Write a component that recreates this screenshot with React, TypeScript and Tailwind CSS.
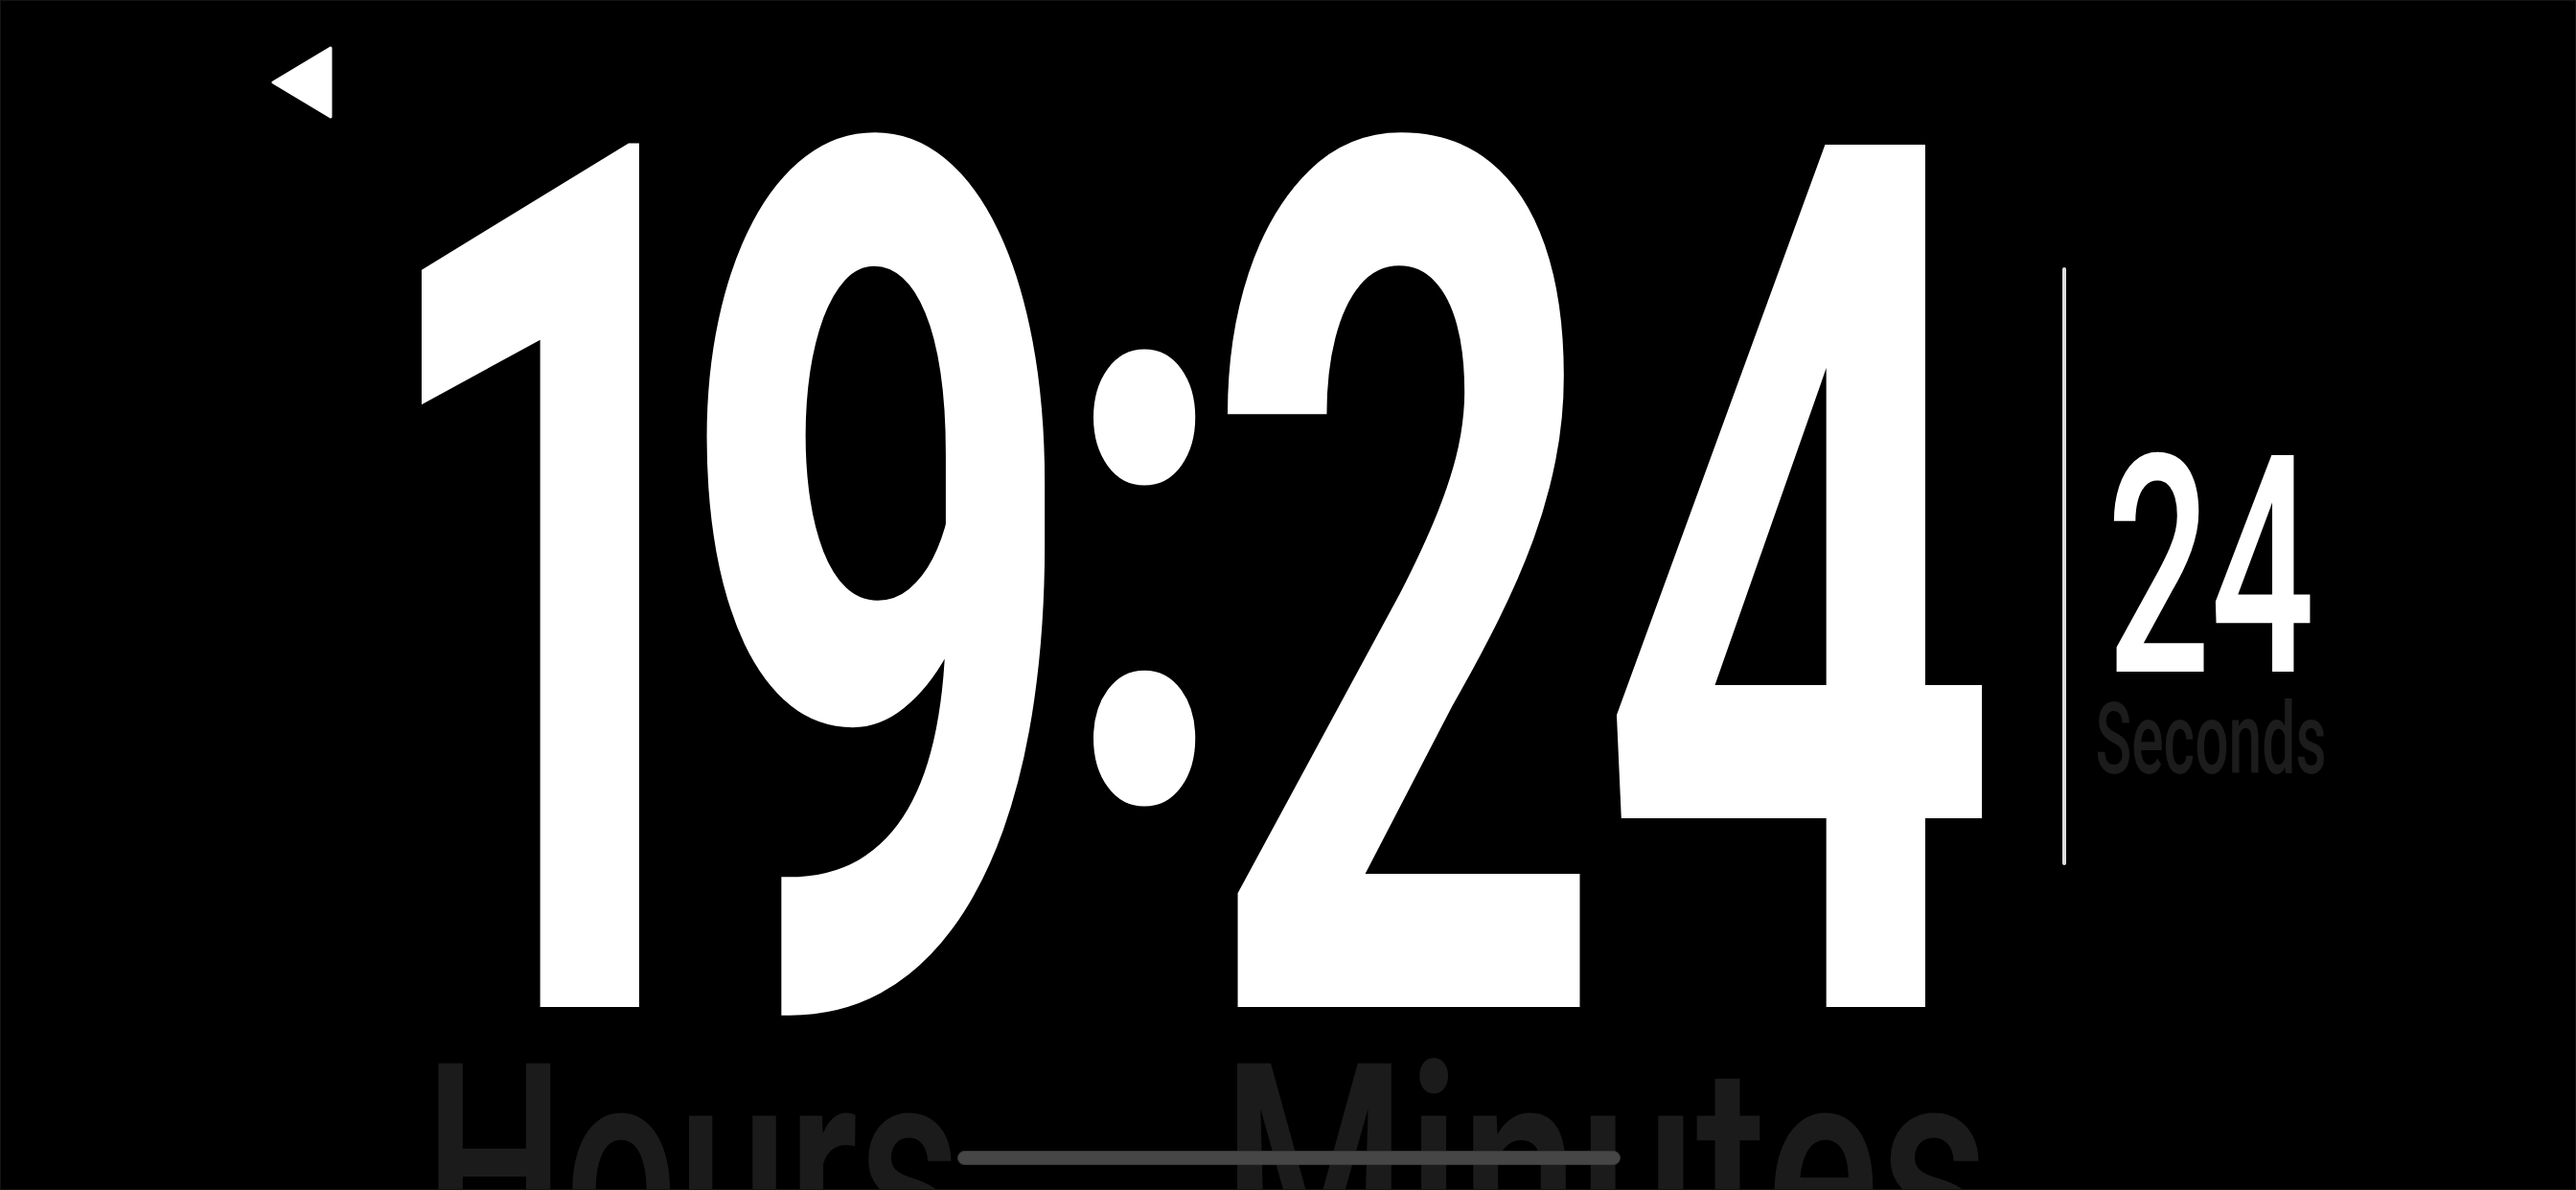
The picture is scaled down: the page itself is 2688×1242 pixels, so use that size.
import React from "react";

function Glyph({ ch, box, text }: { ch: string; box: string; text: string }) {
  return (
    <div className={`flex shrink-0 justify-center ${box}`}>
      <span className={`block whitespace-nowrap ${text}`}>{ch}</span>
    </div>
  );
}

export default function App() {
  const big = "text-[1266px] leading-[977px] font-bold text-white scale-x-[0.58]";
  return (
    <div className="relative flex h-[1242px] w-[2688px] flex-col overflow-hidden border border-[#141414] bg-black font-['Roboto',sans-serif]">
      {/* header */}
      <div className="flex h-[129px] shrink-0 items-start pl-[282px] pt-[47px]">
        <button aria-label="Back" className="block">
          <svg width="64" height="76" viewBox="0 0 64 76">
            <polygon points="62,2 2,38 62,74" fill="#ffffff" stroke="#ffffff" strokeWidth="3" strokeLinejoin="round" />
          </svg>
        </button>
      </div>

      {/* clock row */}
      <div className="flex h-[977px] shrink-0 items-start pl-[439px]">
        <Glyph ch="1" box="ml-[10px] w-[280px]" text={big} />
        <Glyph ch="9" box="w-[374px]" text={big} />
        <Glyph ch=":" box="w-[182px]" text="text-[860px] leading-[827px] font-black text-white scale-x-[0.68]" />
        <Glyph ch="2" box="w-[360px]" text={big} />
        <Glyph ch="4" box="w-[462px]" text={big} />
        <div className="ml-[44px] mt-[149px] h-[624px] w-[4px] shrink-0 rounded-full bg-[#dedede]" />
        <div className="ml-[10px] mt-[323px] flex w-[282px] shrink-0 flex-col items-center">
          <div className="flex justify-center">
            <span className="block text-[318px] leading-[279px] font-medium text-white scale-x-[0.6]">24</span>
          </div>
          <div className="flex justify-center">
            <span className="block whitespace-nowrap text-[104px] leading-[80px] font-medium text-[#1c1c1c] scale-x-[0.6]">Seconds</span>
          </div>
        </div>
      </div>

      {/* labels row */}
      <div className="flex shrink-0 items-start pl-[439px]">
        <Glyph ch="Hours" box="w-[564px]" text="text-[300px] leading-[227px] font-medium text-[#1b1b1b] scale-x-[0.69]" />
        <Glyph ch="Minutes" box="w-[1342px]" text="text-[300px] leading-[227px] font-medium text-[#1b1b1b] scale-x-[0.735]" />
      </div>

      {/* home indicator */}
      <div className="absolute left-[998px] top-[1200px] h-[15px] w-[692px] rounded-full border border-[#383838] bg-[#464646]" />
    </div>
  );
}
